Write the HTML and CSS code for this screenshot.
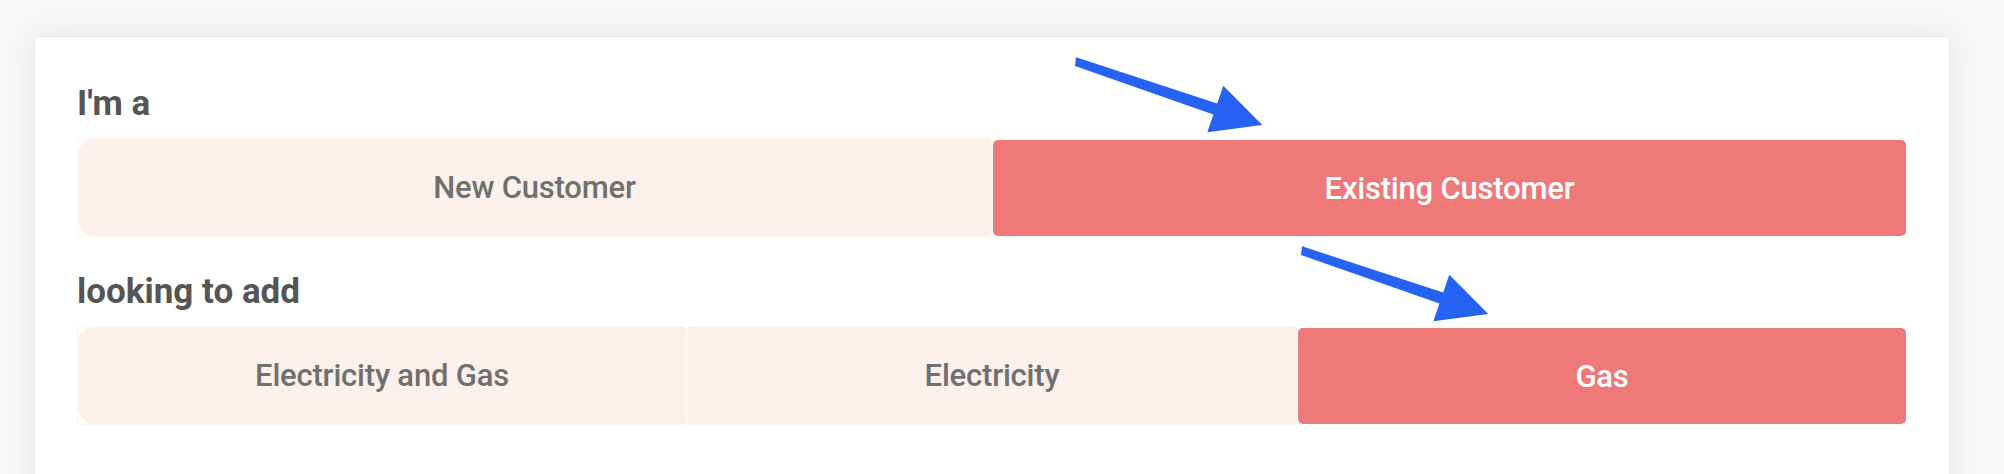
FILE: index.html
```html
<!DOCTYPE html>
<html lang="en">

<head>
    <meta charset="UTF-8">
    <meta name="viewport" content="width=device-width, initial-scale=1.0">
    <title>Customer type</title>
    <link rel="stylesheet" href="styles.css">
</head>

<body>
    <div class="card">
        <!-- Customer type -->
        <h3 class="field-label">I'm a</h3>
        <div class="segmented">
            <button class="option"><span>New Customer</span></button>
            <button class="option active"><span>Existing Customer</span></button>
        </div>

        <!-- Fuel type -->
        <h3 class="field-label">looking to add</h3>
        <div class="segmented">
            <button class="option"><span>Electricity and Gas</span></button>
            <button class="option"><span>Electricity</span></button>
            <button class="option active"><span>Gas</span></button>
        </div>

        <!-- Annotation arrows -->
        <svg class="arrow arrow-top" width="200" height="90" viewBox="0 0 200 90">
            <polygon points="6,7.3 147.2,53.5 153.3,35.7 192.3,75 137.3,82.3 143.4,64.6 5,16" />
        </svg>
        <svg class="arrow arrow-bottom" width="200" height="90" viewBox="0 0 200 90">
            <polygon points="6,7.3 147.2,53.5 153.3,35.7 192.3,75 137.3,82.3 143.4,64.6 5,16" />
        </svg>
    </div>
</body>

</html>
```

FILE: styles.css
```css
/* Page */
body {
    margin: 0;
    background-color: #f8f8f8;
    font-family: Roboto, "Liberation Sans", sans-serif;
}

/* Card */
.card {
    position: relative;
    box-sizing: border-box;
    width: 1916px;
    min-height: 520px;
    margin: 36px 0 0 34px;
    padding: 46px 42px 0 42px;
    background-color: #fff;
    border: 1px solid #e6e6e6;
    border-radius: 5px;
    box-shadow: 0 0 32px rgba(0, 0, 0, 0.08);
}

.field-label {
    margin: 0 0 13px;
    font-size: 35px;
    line-height: 42px;
    font-weight: 700;
    color: #555;
}

/* Segmented buttons */
.segmented {
    display: flex;
    height: 99px;
    margin-bottom: 34px;
}

.option {
    flex: 1;
    display: flex;
    padding: 0;
    background-color: #fff;
    border: 1px solid #fdf4ef;
    border-radius: 4px;
    font-family: inherit;
    cursor: pointer;
}

.option span {
    flex: 1;
    display: flex;
    align-items: center;
    justify-content: center;
    background-color: #fcf0ec;
    font-size: 31px;
    font-weight: 500;
    letter-spacing: -0.2px;
    color: #707070;
}

.option:first-child span {
    border-radius: 16px 0 0 16px;
}

.option.active {
    border-color: #fff;
    border-top-width: 2px;
}

.option.active span {
    background-color: #ef7978;
    border-radius: 5px;
    color: #fff;
}

/* Arrows */
.arrow {
    position: absolute;
    fill: #2662f3;
}

.arrow-top {
    left: 1035px;
    top: 13px;
}

.arrow-bottom {
    left: 1261px;
    top: 202px;
}
```
